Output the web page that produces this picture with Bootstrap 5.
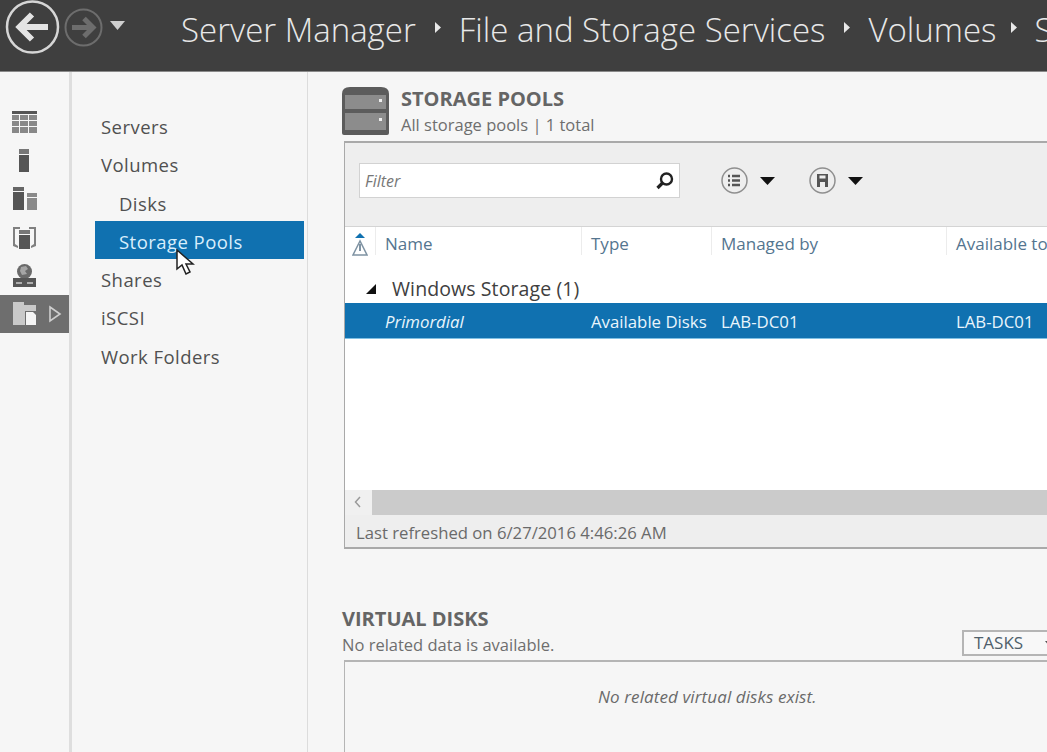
<!DOCTYPE html>
<html lang="en">
<head>
    <meta charset="UTF-8">
    <meta name="viewport" content="width=device-width, initial-scale=1.0">
    <title>Server Manager</title>
    <link href="https://cdn.jsdelivr.net/npm/bootstrap@5.3.0/dist/css/bootstrap.min.css" rel="stylesheet">
    <style>
        html, body { height: 100%; }
        body {
            overflow: hidden;
            background: #f6f6f6;
            color: #555;
            font-family: "Open Sans", "Liberation Sans", sans-serif;
            font-size: 15px;
        }
        .title-bar {
            height: 72px;
            background: #3f3f3f;
            border-bottom: 1px solid #8a8a8a;
            padding-bottom: 16px;
            color: #e8e8e8;
            white-space: nowrap;
        }
        .back-btn { width: 57px; height: 57px; margin-left: 4px; flex: none; }
        .fwd-btn { width: 39px; height: 39px; margin-left: 3px; flex: none; }
        .hist-arrow { width: 15px; height: 9px; margin-left: 7px; margin-right: 56px; flex: none; margin-bottom: 4px; }
        .crumb { font-size: 33px; font-weight: 300; line-height: 1; padding-top: 4px; }
        .crumb-sep { width: 6px; height: 11px; margin: 0 18px 0 19px; flex: none; }
        .crumb-last { margin-left: 15px; margin-right: 17px; }
        .app-body { height: 680px; }
        .icon-rail { width: 72px; flex: none; padding-top: 31px; border-right: 3px solid #dedede; }
        .rail-item { height: 38.4px; width: 69px; padding-left: 12px; }
        .rail-item svg { width: 25px; height: 25px; }
        .rail-active { background: #6e6e6e; height: 38px; }
        .rail-item .rail-chev { margin-left: 9px; width: 18px; height: 18px; }
        .side-nav { width: 236px; flex: none; padding: 35.6px 3px 0 23px; border-right: 1px solid #dcdcdc; font-size: 18.5px; letter-spacing: .45px; }
        .nav-row { height: 38.4px; padding-left: 6px; color: #505050; }
        .nav-sub { padding-left: 24px; }
        .nav-on { background: #1071b0; color: #d8eefc; height: 38px; width: 209px; margin-top: -2px; margin-bottom: 2px; padding-top: 4px; }
        .main-pane { flex: 1; min-width: 0; padding: 15px 0 0 34px; overflow: hidden; position: relative; }
        .pool-icon { width: 48px; height: 48px; flex: none; margin-right: 11px; }
        .sect-title { font-weight: 700; font-size: 20px; line-height: 24px; color: #656565; }
        .sect-sub { font-size: 16.5px; line-height: 22px; margin-top: 3px; color: #6e6e6e; }
        .pool-panel { width: 760px; margin-top: 5px; margin-left: 2px; border: 2px solid #a9a9a9; border-left-width: 1px; border-right: 0; background: #fff; }
        .tool-strip { height: 84px; background: #eeeeee; border-bottom: 1px solid #d4d4d4; padding: 20px 0 0 14px; }
        .filter-box { width: 321px; height: 35px; background: #fff; border: 1px solid #d2d2d2; padding: 0 4px 0 5px; font-size: 16px; font-style: italic; color: #777; }
        .filter-box svg { width: 20px; height: 20px; }
        .round-btn { width: 27px; height: 27px; flex: none; margin-top: 4px; }
        .btn-list { margin-left: 41px; }
        .btn-save { margin-left: 34px; }
        .drop-tri { width: 15px; height: 8px; flex: none; margin: 14px 0 0 12px; }
        .col-grid { display: grid; grid-template-columns: 30px 206px 130px 235px 1fr; }
        .col-head { height: 36px; color: #54758f; font-size: 17px; }
        .col-head > div { padding-left: 9px; border-left: 1px solid #ececec; height: 28px; line-height: 34px; white-space: nowrap; }
        .col-head > div:first-child { border: 0; padding: 0; }
        .group-row { height: 40px; padding: 12px 0 0 21px; font-size: 19.5px; color: #404040; letter-spacing: .1px; }
        .data-row { height: 36px; background: #1071b0; color: #e9f5fc; font-size: 16.8px; line-height: 37px; border-bottom: 1px solid #7fc0e4; }
        .data-row > div { padding-left: 10px; white-space: nowrap; }
        .grid-blank { height: 151px; background: #fff; }
        .scroll-row { height: 25px; background: #f0f0f0; }
        .scroll-btn { width: 27px; flex: none; padding: 6px 0 0 9px; }
        .scroll-fill { flex: 1; background: #cbcbcb; }
        .foot-row { height: 32px; background: #eeeeee; font-size: 16.7px; line-height: 35px; padding-left: 11px; color: #6a6a6a; }
        .cursor-mark { position: absolute; left: 175px; top: 249px; width: 20px; height: 26px; }
        .virt-head { margin-top: 58px; width: 720px; }
        .tasks-btn { width: 100px; height: 26px; flex: none; border: 2px solid #b5b5b5; background: #f8f8f8; color: #4f5f6b; font-size: 17px; line-height: 22px; padding-left: 10px; white-space: nowrap; }
        .tasks-arrow { width: 8px; height: 5px; margin: 0 0 2px 22px; }
        .virt-panel { width: 760px; height: 120px; margin: 4px 0 0 2px; border: 2px solid #b5b5b5; border-left-width: 1px; border-right: 0; border-bottom: 0; padding: 22px 0 0 253px; font-size: 17px; font-style: italic; color: #6a6a6a; letter-spacing: .1px; }
    </style>
</head>
<body>
    <div class="title-bar d-flex align-items-center">
        <svg class="back-btn" viewBox="0 0 57 57"><circle cx="28.5" cy="28" r="25.5" fill="none" stroke="#d6d6d6" stroke-width="2.5"/><path d="M44 28H17M28 15.5 15.5 28 28 40.5" fill="none" stroke="#e4e4e4" stroke-width="6"/></svg>
        <svg class="fwd-btn" viewBox="0 0 39 39"><circle cx="19.5" cy="19.5" r="18" fill="none" stroke="#6d6d6d" stroke-width="2"/><path d="M8 19.5h21M20 10.5l9 9-9 9" fill="none" stroke="#6d6d6d" stroke-width="5"/></svg>
        <svg class="hist-arrow" viewBox="0 0 15 9"><path d="M0 0h15L7.5 9z" fill="#cfcfcf"/></svg>
        <span class="crumb">Server Manager</span>
        <svg class="crumb-sep" viewBox="0 0 6 11"><path d="M0 0l6 5.5-6 5.5z" fill="#e8e8e8"/></svg>
        <span class="crumb">File and Storage Services</span>
        <svg class="crumb-sep" viewBox="0 0 6 11"><path d="M0 0l6 5.5-6 5.5z" fill="#e8e8e8"/></svg>
        <span class="crumb">Volumes</span>
        <svg class="crumb-sep crumb-last" viewBox="0 0 6 11"><path d="M0 0l6 5.5-6 5.5z" fill="#e8e8e8"/></svg>
        <span class="crumb">Storage Pools</span>
    </div>
    <div class="app-body d-flex">
        <div class="icon-rail">
            <div class="rail-item d-flex align-items-center">
                <svg viewBox="0 0 25 25"><path d="M0 1h25v3H0z" fill="#555"/><path d="M0 5h7v5H0zM8 5h8v5H8zM17 5h8v5h-8zM0 11h7v5H0zM8 11h8v5H8zM17 11h8v5h-8zM0 17h7v6H0zM8 17h8v6H8zM17 17h8v6h-8z" fill="#888"/></svg>
            </div>
            <div class="rail-item d-flex align-items-center">
                <svg viewBox="0 0 25 25"><path d="M7 1h10v5H7z" fill="#777"/><path d="M7 7h10v17H7z" fill="#555"/></svg>
            </div>
            <div class="rail-item d-flex align-items-center">
                <svg viewBox="0 0 25 25"><path d="M1 1h11v4H1z" fill="#666"/><path d="M1 6h11v18H1z" fill="#555"/><path d="M15 7h10v4H15zM15 12h10v12H15z" fill="#8a8a8a"/></svg>
            </div>
            <div class="rail-item d-flex align-items-center">
                <svg viewBox="0 0 25 25"><path d="M1 2h7v2H3v15l3 2v2l-5-2zM24 2h-7v2h5v15l-3 2v2l5-2z" fill="#808080"/><path d="M7 5h11v4H7z" fill="#777"/><path d="M7 10h11v14H7z" fill="#555"/></svg>
            </div>
            <div class="rail-item d-flex align-items-center">
                <svg viewBox="0 0 25 25"><circle cx="12.5" cy="8.5" r="7.5" fill="#6a6a6a"/><path d="M9 4l5-1 2 3-3 2 2 3-5 1-2-4z" fill="#a5a5a5"/><path d="M1 15h23v9H1z" fill="#555"/><path d="M4 20h6M15 20h6" stroke="#ccc" stroke-width="1.5"/></svg>
            </div>
            <div class="rail-item rail-active d-flex align-items-center">
                <svg viewBox="0 0 25 25"><path d="M1 1h11v3h12v6H13v14H1z" fill="#c9c9c9"/><path d="M14 11h7l3 3v10H14z" fill="#f4f4f4"/></svg>
                <svg class="rail-chev" viewBox="0 0 18 18"><path d="M4 2l10 7-10 7z" fill="none" stroke="#cfcfcf" stroke-width="1.6"/></svg>
            </div>
        </div>
        <div class="side-nav">
            <div class="nav-row d-flex align-items-center">Servers</div>
            <div class="nav-row d-flex align-items-center">Volumes</div>
            <div class="nav-row nav-sub d-flex align-items-center">Disks</div>
            <div class="nav-row nav-sub nav-on d-flex align-items-center">Storage Pools</div>
            <div class="nav-row d-flex align-items-center">Shares</div>
            <div class="nav-row d-flex align-items-center">iSCSI</div>
            <div class="nav-row d-flex align-items-center">Work Folders</div>
        </div>
        <div class="main-pane">
            <div class="d-flex">
                <svg class="pool-icon" viewBox="0 0 48 48"><path d="M0 7q0-7 8-7h31q8 0 8 7v39q0 2-2 2H2q-2 0-2-2z" fill="#5c5c5c"/><path d="M3 8h41v14H3zM3 26h41v17H3z" fill="#8c8c8c"/><path d="M37 12h3v3h-3zM37 31h3v3h-3z" fill="#eee"/></svg>
                <div>
                    <div class="sect-title">STORAGE POOLS</div>
                    <div class="sect-sub">All storage pools | 1 total</div>
                </div>
            </div>
            <div class="pool-panel">
                <div class="tool-strip d-flex align-items-start">
                    <div class="filter-box d-flex align-items-center justify-content-between">
                        <span>Filter</span>
                        <svg viewBox="0 0 20 20"><circle cx="11.5" cy="8" r="5.5" fill="none" stroke="#222" stroke-width="2.4"/><path d="M7.5 12 2.5 17" stroke="#222" stroke-width="3.2"/></svg>
                    </div>
                    <svg class="round-btn btn-list" viewBox="0 0 27 27"><circle cx="13.5" cy="13.5" r="12.5" fill="none" stroke="#8f8f8f" stroke-width="1.5"/><path d="M11 9h8M11 13.5h8M11 18h8M7 9h2M7 13.5h2M7 18h2" stroke="#555" stroke-width="2.4"/></svg>
                    <svg class="drop-tri" viewBox="0 0 15 8"><path d="M0 0h15L7.5 8z" fill="#111"/></svg>
                    <svg class="round-btn btn-save" viewBox="0 0 27 27"><circle cx="13.5" cy="13.5" r="12.5" fill="none" stroke="#8f8f8f" stroke-width="1.5"/><path d="M8 7h11v13h-3v-5h-5v5H8z" fill="#555"/><path d="M10.5 8.5h6v3h-6z" fill="#eee"/></svg>
                    <svg class="drop-tri" viewBox="0 0 15 8"><path d="M0 0h15L7.5 8z" fill="#111"/></svg>
                </div>
                <div class="col-grid col-head">
                    <div class="text-center">
                        <svg width="16" height="28" viewBox="0 0 16 28"><path d="M3 7l5-5 5 5z" fill="#1071b0"/><path d="M8 10 1 24h14z" fill="none" stroke="#7f93a3" stroke-width="1.5"/><path d="M8 13v7" stroke="#7f93a3" stroke-width="2"/></svg>
                    </div>
                    <div>Name</div>
                    <div>Type</div>
                    <div>Managed by</div>
                    <div>Available to</div>
                </div>
                <div class="group-row d-flex align-items-center">
                    <svg class="me-3" width="10" height="10" viewBox="0 0 10 10"><path d="M10 0v10H0z" fill="#111"/></svg>
                    <span>Windows Storage (1)</span>
                </div>
                <div class="col-grid data-row">
                    <div></div>
                    <div class="fst-italic">Primordial</div>
                    <div>Available Disks</div>
                    <div>LAB-DC01</div>
                    <div>LAB-DC01</div>
                </div>
                <div class="grid-blank"></div>
                <div class="scroll-row d-flex">
                    <div class="scroll-btn"><svg class="d-block" width="7" height="12" viewBox="0 0 7 12"><path d="M6 1 1.5 6 6 11" fill="none" stroke="#9a9a9a" stroke-width="1.5"/></svg></div>
                    <div class="scroll-fill"></div>
                </div>
                <div class="foot-row">Last refreshed on 6/27/2016 4:46:26 AM</div>
            </div>
            <div class="virt-head d-flex justify-content-between align-items-end">
                <div>
                    <div class="sect-title">VIRTUAL DISKS</div>
                    <div class="sect-sub">No related data is available.</div>
                </div>
                <div class="tasks-btn">TASKS<svg class="tasks-arrow" viewBox="0 0 8 5"><path d="M0 0h8L4 5z" fill="#555"/></svg></div>
            </div>
            <div class="virt-panel">No related virtual disks exist.</div>
        </div>
    </div>
    <svg class="cursor-mark" viewBox="0 0 20 26"><path d="M2 1v19l5-4 4 9 4-2-4-8h7z" fill="#fff" stroke="#222" stroke-width="1.5"/></svg>
</body>
</html>
